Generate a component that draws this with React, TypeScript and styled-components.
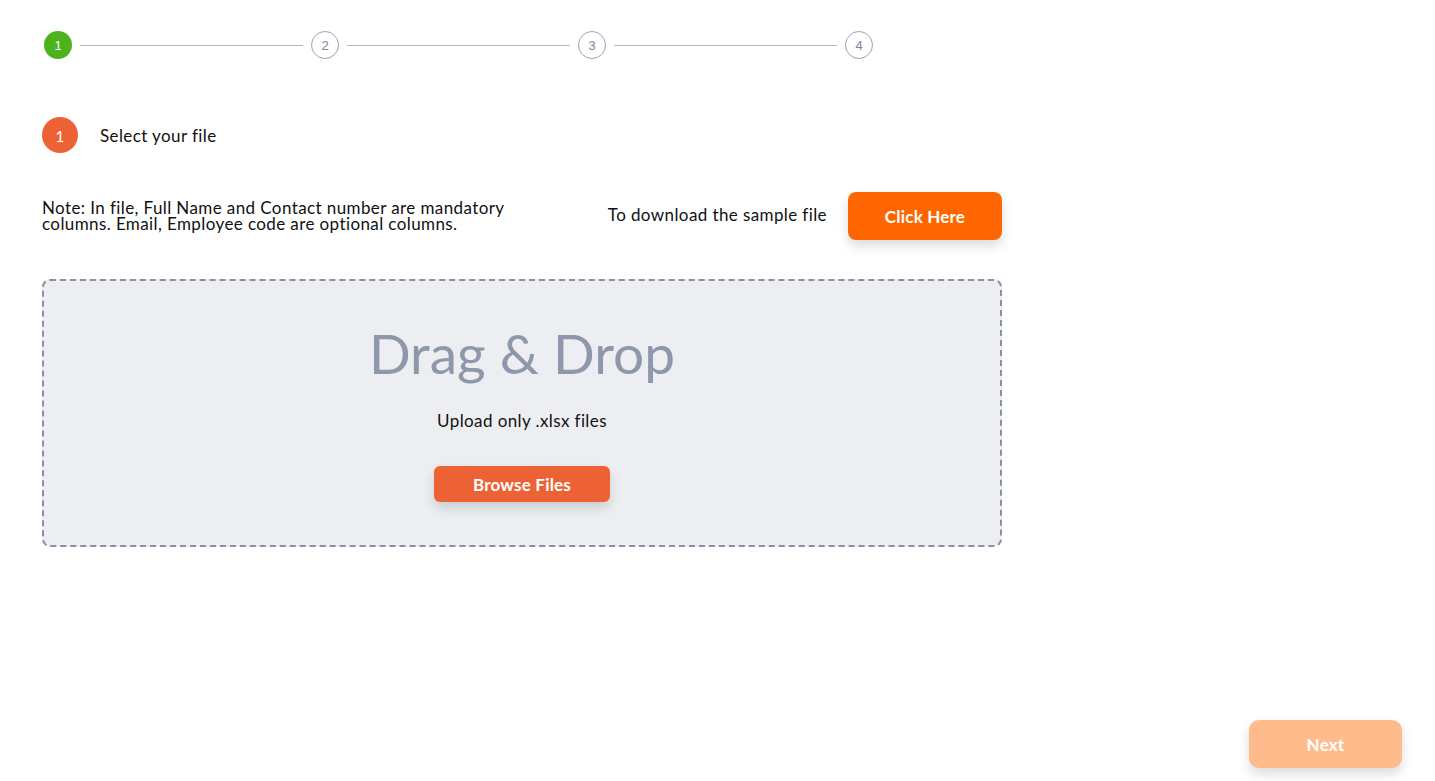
import React from "react";
import styled, { createGlobalStyle } from "styled-components";

const Global = createGlobalStyle`
  html, body { margin: 0; padding: 0; background: #ffffff; }
  body { font-family: "Lato", "Noto Sans", sans-serif; color: #111; }
  * { box-sizing: border-box; }
`;

const Page = styled.div`
  position: relative;
  width: 1435px;
  height: 781px;
  padding: 31px 0 0 42px;
  overflow: hidden;
`;

const Stepper = styled.div`
  display: flex;
  align-items: center;
  width: 829px;
  margin-left: 2px;
`;

const StepDot = styled.div<{ $active?: boolean }>`
  flex: none;
  width: 28px;
  height: 28px;
  border-radius: 50%;
  display: flex;
  align-items: center;
  justify-content: center;
  font-family: "Liberation Sans", Arial, sans-serif;
  font-size: 13px;
  color: ${(p) => (p.$active ? "#ffffff" : "#7d8599")};
  background: ${(p) => (p.$active ? "#4cb31d" : "#ffffff")};
  border: ${(p) => (p.$active ? "none" : "1px solid #9ba2b3")};
`;

const StepLine = styled.div`
  flex: 1;
  height: 1px;
  background: #b4b8c2;
  margin: 0 8px;
`;

const SectionHead = styled.div`
  display: flex;
  align-items: center;
  gap: 22px;
  margin-top: 58px;
`;

const Badge = styled.div`
  width: 36px;
  height: 36px;
  border-radius: 50%;
  background: #ec6234;
  color: #fff;
  display: flex;
  align-items: center;
  justify-content: center;
  font-size: 16px;
`;

const BodyText = styled.div`
  font-size: 17px;
  letter-spacing: 0.4px;
  color: #111;
`;

const InfoRow = styled.div`
  display: flex;
  align-items: center;
  width: 960px;
  margin-top: 39px;
`;

const Note = styled(BodyText)`
  width: 480px;
  line-height: 16px;
  margin-top: 0;
`;

const Spacer = styled.div`
  flex: 1;
`;

const DownloadText = styled(BodyText)`
  margin-right: 21px;
  margin-top: -4px;
`;

const PrimaryButton = styled.button<{ $w: number; $h: number; $bg: string; $r: number }>`
  width: ${(p) => p.$w}px;
  height: ${(p) => p.$h}px;
  background: ${(p) => p.$bg};
  border-radius: ${(p) => p.$r}px;
  border: none;
  color: #fff;
  font-family: "Lato", sans-serif;
  font-weight: 700;
  font-size: 17px;
  letter-spacing: 0.2px;
  box-shadow: 0 6px 12px rgba(0, 0, 0, 0.14);
  cursor: pointer;
`;

const DropZone = styled.div`
  width: 960px;
  height: 268px;
  margin-top: 39px;
  background: #edeef2;
  border: 2px dashed #8a91a5;
  border-radius: 8px;
  display: flex;
  flex-direction: column;
  align-items: center;
`;

const DropTitle = styled.div`
  font-size: 55px;
  color: #8f97ab;
  margin-top: 37px;
  line-height: 70px;
  margin-left: 0;
`;

const DropSub = styled(BodyText)`
  margin-top: 22px;
`;

const BrowseWrap = styled.div`
  margin-top: 35px;
`;

const NextWrap = styled.div`
  position: absolute;
  right: 33px;
  bottom: 13px;
`;

export default function App() {
  return (
    <>
      <Global />
      <Page>
        <Stepper>
          <StepDot $active>1</StepDot>
          <StepLine />
          <StepDot>2</StepDot>
          <StepLine />
          <StepDot>3</StepDot>
          <StepLine />
          <StepDot>4</StepDot>
        </Stepper>
        <SectionHead>
          <Badge>1</Badge>
          <BodyText>Select your file</BodyText>
        </SectionHead>
        <InfoRow>
          <Note>
            Note: In file, Full Name and Contact number are mandatory columns. Email, Employee code are optional columns.
          </Note>
          <Spacer />
          <DownloadText>To download the sample file</DownloadText>
          <PrimaryButton $w={154} $h={48} $bg="#ff6600" $r={8}>
            Click Here
          </PrimaryButton>
        </InfoRow>
        <DropZone>
          <DropTitle>Drag &amp; Drop</DropTitle>
          <DropSub>Upload only .xlsx files</DropSub>
          <BrowseWrap>
            <PrimaryButton $w={176} $h={36} $bg="#ec6234" $r={6}>
              Browse Files
            </PrimaryButton>
          </BrowseWrap>
        </DropZone>
        <NextWrap>
          <PrimaryButton $w={153} $h={48} $bg="#ffbb8c" $r={10}>
            Next
          </PrimaryButton>
        </NextWrap>
      </Page>
    </>
  );
}
